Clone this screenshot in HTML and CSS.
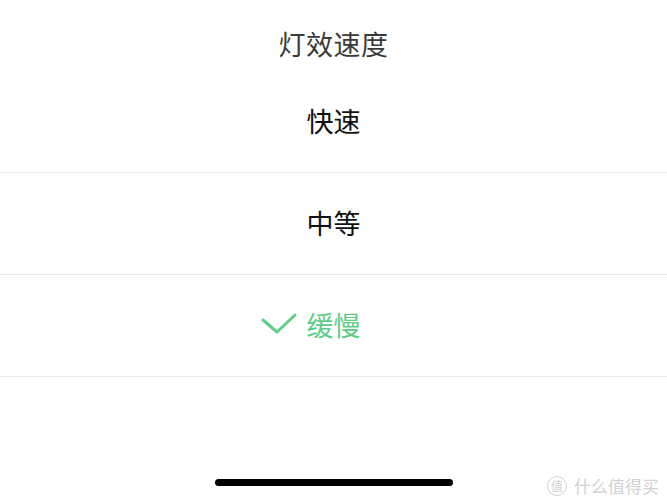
FILE: index.html
```html
<!DOCTYPE html>
<html lang="zh">
<head>
<meta charset="utf-8">
<link rel="stylesheet" href="styles.css">
</head>
<body>
<div class="sheet">
  <div class="title">灯效速度</div>
  <div class="option"><span class="label">快速</span></div>
  <div class="option"><span class="label">中等</span></div>
  <div class="option selected">
    <svg class="check" width="36" height="24" viewBox="0 0 36 24"><path d="M2 9 L16 21 L34 4" fill="none" stroke="#5dcc86" stroke-width="3" stroke-linecap="round" stroke-linejoin="round"/></svg>
    <span class="label">缓慢</span>
  </div>
  <div class="spacer"></div>
  <div class="home"><div class="home-bar"></div></div>
</div>
<div class="watermark">
  <span class="logo">值</span>
  <span class="wm-text">什么值得买</span>
</div>
</body>
</html>
```
FILE: styles.css
```css
html, body {
  margin: 0;
  padding: 0;
  background: #fff;
}
body {
  width: 667px;
  height: 500px;
  overflow: hidden;
  position: relative;
  font-family: "Noto Sans CJK SC", "Noto Sans", sans-serif;
}
.sheet {
  display: flex;
  flex-direction: column;
  height: 500px;
}
.title {
  height: 71px;
  box-sizing: border-box;
  padding-top: 24px;
  text-align: center;
  font-size: 27px;
  line-height: 40px;
  color: #3a3a3a;
  letter-spacing: 0.5px;
}
.option {
  height: 102px;
  border-bottom: 1.5px solid #e8e8e8;
  box-sizing: border-box;
  display: flex;
  align-items: center;
  justify-content: center;
  font-size: 27px;
  color: #111;
  position: relative;
}
.option .label {
  line-height: 36px;
  padding-bottom: 2px;
}
.option.selected {
  color: #5dcc86;
}
.check {
  position: absolute;
  left: 261px;
  top: 36px;
}
.spacer {
  flex: 1;
}
.home {
  height: 32px;
  display: flex;
  justify-content: center;
}
.home-bar {
  width: 238px;
  height: 7px;
  border-radius: 4px;
  background: #000;
  margin-top: 11px;
}
.watermark {
  position: absolute;
  left: 547px;
  bottom: 3px;
  display: flex;
  align-items: center;
  gap: 7px;
  color: #d2d2d2;
}
.logo {
  width: 18px;
  height: 18px;
  border: 1.5px solid #d2d2d2;
  border-radius: 50%;
  font-size: 12px;
  line-height: 18px;
  text-align: center;
}
.wm-text {
  font-size: 17px;
  line-height: 22px;
  white-space: nowrap;
}
```
